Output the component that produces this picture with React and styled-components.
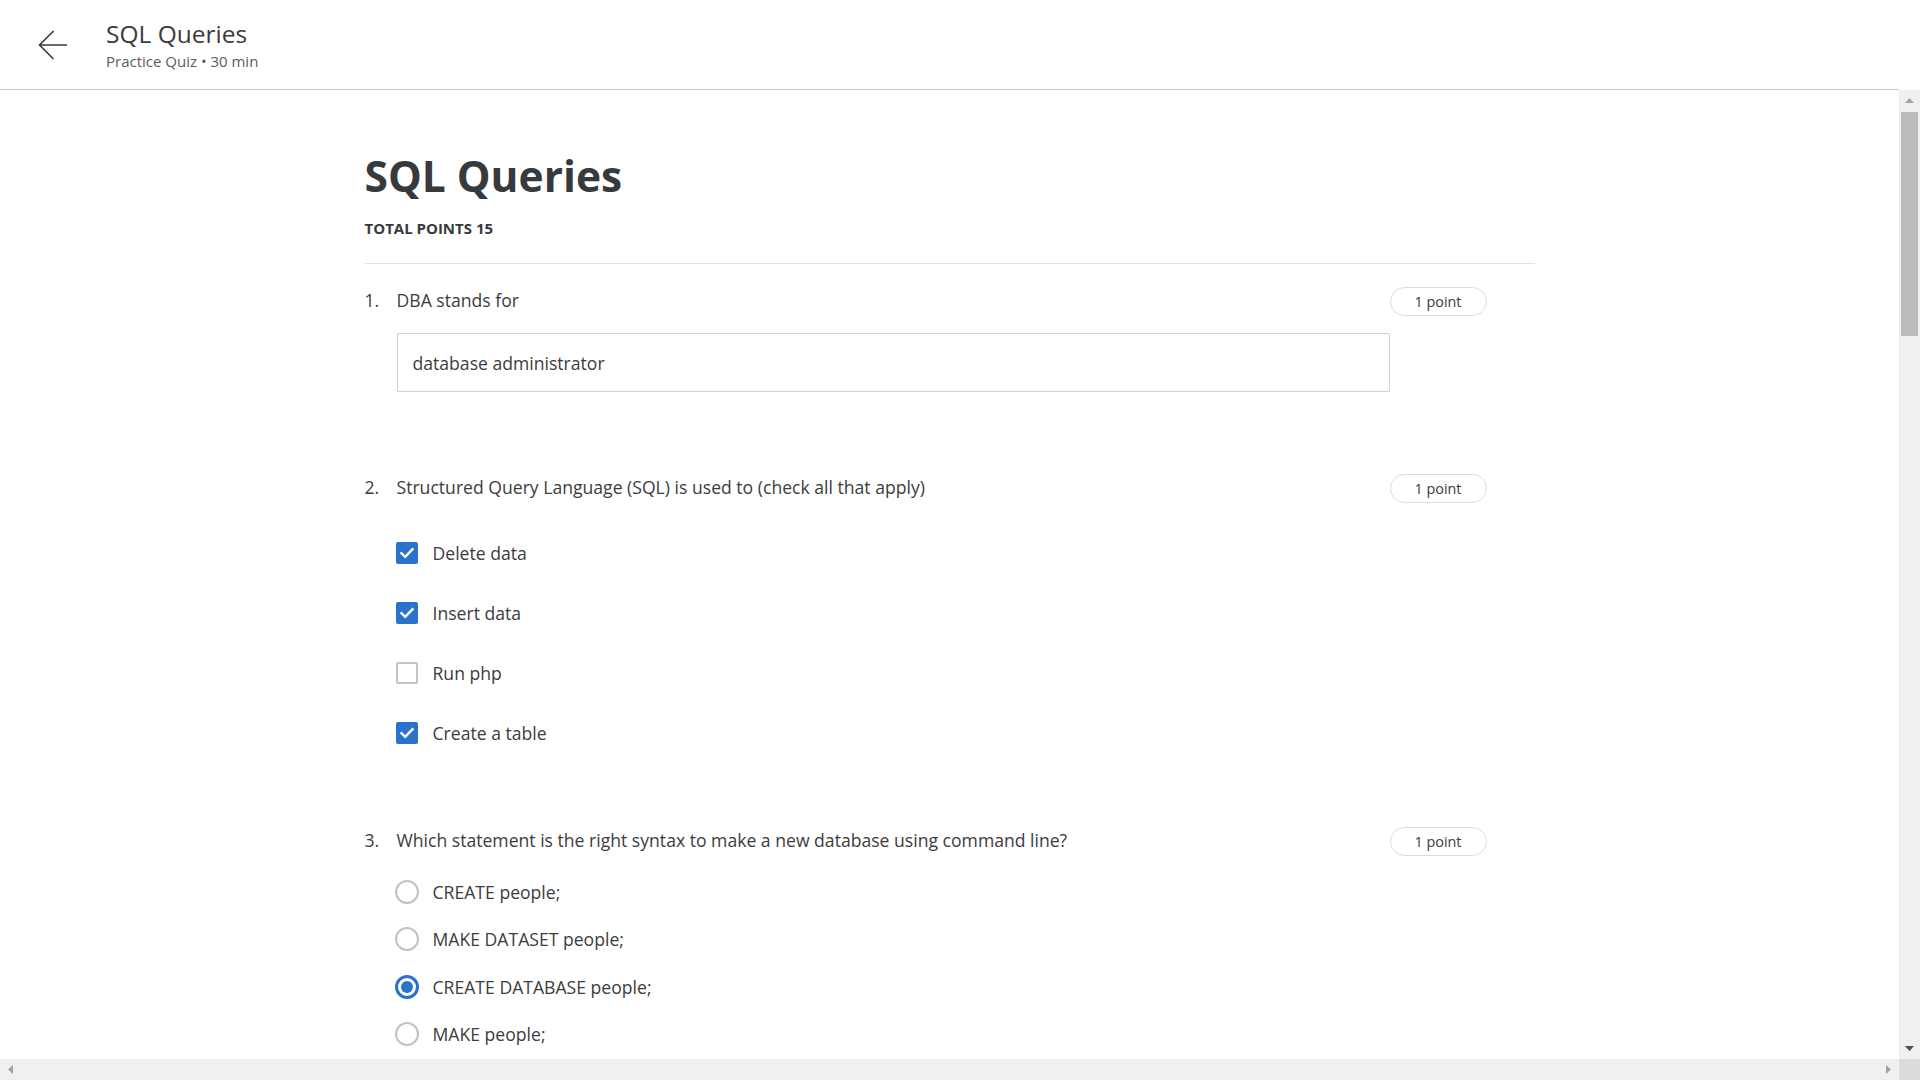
import React from 'react'
import styled, { createGlobalStyle } from 'styled-components'

const GlobalStyle = createGlobalStyle`
  html, body {
    margin: 0;
    padding: 0;
    height: 100%;
    overflow: hidden;
    background: #ffffff;
    font-family: "Open Sans", "Noto Sans", Arial, sans-serif;
    color: #373a3c;
  }
  #root {
    height: 100%;
  }
`

const Page = styled.div`
  height: 100vh;
  display: flex;
  flex-direction: column;
`

const TopBar = styled.header`
  height: 89px;
  flex: 0 0 auto;
  display: flex;
  align-items: center;
  gap: 38px;
  padding-left: 38px;
  background: #fff;
`

const BackButton = styled.button`
  width: 30px;
  height: 30px;
  padding: 0;
  border: none;
  background: none;
  display: flex;
  align-items: center;
  justify-content: center;
  cursor: pointer;
`

const TopText = styled.div`
  display: flex;
  flex-direction: column;
`

const TopTitle = styled.div`
  font-size: 24.5px;
  line-height: 30px;
  color: #3b3b3b;
`

const TopSub = styled.div`
  margin-top: 2px;
  font-size: 15px;
  line-height: 20px;
  color: #5c5c5c;
`

/* content area with a classic scrollbar frame around it */
const Body = styled.div`
  flex: 1 1 auto;
  min-height: 0;
  display: grid;
  grid-template-columns: 1fr 21px;
  grid-template-rows: 1fr 21px;
`

const Viewport = styled.main`
  overflow: hidden;
  border-top: 1px solid #c9c9c9;
`

const VBar = styled.div`
  display: flex;
  flex-direction: column;
  background: #f0f0f0;
  border-top: 1px solid #fff;
`

const HBar = styled.div`
  display: flex;
  background: #f0f0f0;
`

const Corner = styled.div`
  background: #dcdcdc;
`

const ArrowBtn = styled.div`
  flex: 0 0 21px;
  height: 21px;
  display: flex;
  align-items: center;
  justify-content: center;
`

const Track = styled.div`
  flex: 1 1 auto;
`

const Thumb = styled.div`
  margin: 1px 2px 0;
  height: 224px;
  background: #bcbcbc;
`

const Tri = ({ dir, color }) => {
  const shapes = {
    up: ['9', '5', 'M0 5 L4.5 0 L9 5z'],
    down: ['9', '5', 'M0 0 L9 0 L4.5 5z'],
    left: ['5', '9', 'M5 0 L5 9 L0 4.5z'],
    right: ['5', '9', 'M0 0 L5 4.5 L0 9z'],
  }
  const [w, h, d] = shapes[dir]
  return (
    <svg width={w} height={h} viewBox={`0 0 ${w} ${h}`}>
      <path d={d} fill={color} />
    </svg>
  )
}

const Column = styled.div`
  width: 1170px;
  box-sizing: border-box;
  margin: 0 auto;
  padding-top: 60px;
`

const Intro = styled.div`
  padding-bottom: 25px;
  border-bottom: 1px solid #e1e1e1;
`

const Title = styled.h1`
  margin: 0;
  font-size: 42.5px;
  line-height: 52px;
  font-weight: 700;
  color: #373a3c;
`

const Total = styled.div`
  margin-top: 16px;
  font-size: 15px;
  line-height: 20px;
  font-weight: 700;
  color: #373a3c;
`

const QuestionList = styled.ol`
  list-style: none;
  margin: 23px 0 0;
  padding: 0;
`

const Question = styled.li`
  display: grid;
  grid-template-columns: 32px 1fr 97px;
  align-items: center;
  padding-right: 48px;
  padding-bottom: 82px;
`

const Num = styled.span`
  margin-bottom: 3px;
  font-size: 17.6px;
  line-height: 24px;
  color: #3c3c3c;
`

const Prompt = styled.div`
  margin-bottom: 3px;
  font-size: 17.6px;
  line-height: 24px;
  color: #3c3c3c;
`

const Points = styled.span`
  height: 29px;
  box-sizing: border-box;
  border: 1px solid #dcdcdc;
  border-radius: 15px;
  display: flex;
  align-items: center;
  justify-content: center;
  font-size: 14.4px;
  color: #3c3c3c;
`

const Answers = styled.div`
  grid-column: 2;
  margin-top: ${p => p.$top}px;
  display: flex;
  flex-direction: column;
  gap: ${p => p.$gap || 0}px;
`

const TextAnswer = styled.input`
  width: 100%;
  height: 59px;
  box-sizing: border-box;
  border: 1px solid #cfd0d6;
  border-radius: 1px;
  padding: 0 15px;
  font-family: inherit;
  font-size: 17.6px;
  color: #3c3c3c;
  outline: none;
`

const Option = styled.label`
  display: flex;
  align-items: center;
  gap: ${p => p.$gap}px;
  font-size: 17.6px;
  line-height: 24px;
  color: #3c3c3c;
  cursor: pointer;
`

const Box = styled.span`
  width: 22px;
  height: 22px;
  box-sizing: border-box;
  flex: 0 0 auto;
  margin-left: -1px;
  border-radius: 2px;
  display: flex;
  align-items: center;
  justify-content: center;
  background: ${p => (p.$on ? '#2a73cc' : '#fff')};
  border: 2px solid ${p => (p.$on ? '#2a73cc' : '#c4c4c4')};
`

const Radio = styled.span`
  width: 24px;
  height: 24px;
  box-sizing: border-box;
  flex: 0 0 auto;
  margin-left: -2px;
  border-radius: 50%;
  display: flex;
  align-items: center;
  justify-content: center;
  border: ${p => (p.$on ? '3px solid #2a73cc' : '2.5px solid #c2c2c2')};
`

const Dot = styled.span`
  width: 12px;
  height: 12px;
  border-radius: 50%;
  background: #2a73cc;
`

const Check = () => (
  <svg width="18" height="18" viewBox="0 0 18 18">
    <path d="M3.5 9.3 L7.2 12.8 L14.5 5.2" fill="none" stroke="#fff" strokeWidth="2.4" strokeLinecap="square" />
  </svg>
)

const checks = [
  ['Delete data', true],
  ['Insert data', true],
  ['Run php', false],
  ['Create a table', true],
]

const radios = [
  ['CREATE people;', false],
  ['MAKE DATASET people;', false],
  ['CREATE DATABASE people;', true],
  ['MAKE people;', false],
]

export default function App() {
  return (
    <>
      <GlobalStyle />
      <Page>
        <TopBar>
          <BackButton aria-label="Back">
            <svg width="30" height="30" viewBox="0 0 30 30">
              <path d="M29 15 H1.5 M15.5 1 L1.5 15 L15.5 29" fill="none" stroke="#3a3a3a" strokeWidth="1.6" />
            </svg>
          </BackButton>
          <TopText>
            <TopTitle>SQL Queries</TopTitle>
            <TopSub>Practice Quiz • 30 min</TopSub>
          </TopText>
        </TopBar>
        <Body>
          <Viewport>
            <Column>
              <Intro>
                <Title>SQL Queries</Title>
                <Total>TOTAL POINTS 15</Total>
              </Intro>
              <QuestionList>
                <Question>
                  <Num>1.</Num>
                  <Prompt>DBA stands for</Prompt>
                  <Points>1 point</Points>
                  <Answers $top={17}>
                    <TextAnswer defaultValue="database administrator" />
                  </Answers>
                </Question>
                <Question>
                  <Num>2.</Num>
                  <Prompt>Structured Query Language (SQL) is used to (check all that apply)</Prompt>
                  <Points>1 point</Points>
                  <Answers $top={38} $gap={36}>
                    {checks.map(([label, on]) => (
                      <Option key={label} $gap={15}>
                        <Box $on={on}>{on && <Check />}</Box>
                        {label}
                      </Option>
                    ))}
                  </Answers>
                </Question>
                <Question>
                  <Num>3.</Num>
                  <Prompt>Which statement is the right syntax to make a new database using command line?</Prompt>
                  <Points>1 point</Points>
                  <Answers $top={24} $gap={23.4}>
                    {radios.map(([label, on]) => (
                      <Option key={label} $gap={14}>
                        <Radio $on={on}>{on && <Dot />}</Radio>
                        {label}
                      </Option>
                    ))}
                  </Answers>
                </Question>
              </QuestionList>
            </Column>
          </Viewport>
          <VBar>
            <ArrowBtn><Tri dir="up" color="#a3a3a3" /></ArrowBtn>
            <Track><Thumb /></Track>
            <ArrowBtn><Tri dir="down" color="#505050" /></ArrowBtn>
          </VBar>
          <HBar>
            <ArrowBtn><Tri dir="left" color="#a3a3a3" /></ArrowBtn>
            <Track />
            <ArrowBtn><Tri dir="right" color="#a3a3a3" /></ArrowBtn>
          </HBar>
          <Corner />
        </Body>
      </Page>
    </>
  )
}
